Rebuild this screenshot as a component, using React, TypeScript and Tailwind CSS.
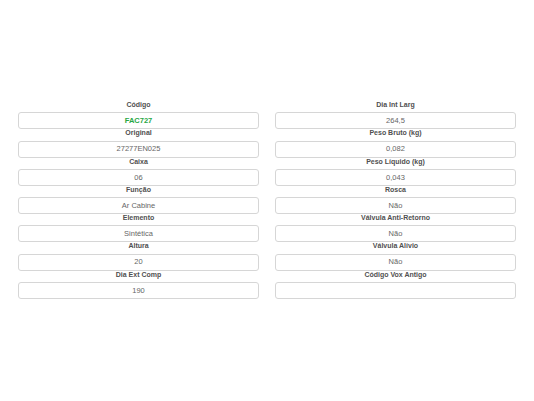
const left = [
  { label: "Código", value: "FAC727", highlight: true },
  { label: "Original", value: "27277EN025" },
  { label: "Caixa", value: "06" },
  { label: "Função", value: "Ar Cabine" },
  { label: "Elemento", value: "Sintética" },
  { label: "Altura", value: "20" },
  { label: "Dia Ext Comp", value: "190" },
];

const right = [
  { label: "Dia Int Larg", value: "264,5" },
  { label: "Peso Bruto (kg)", value: "0,082" },
  { label: "Peso Líquido (kg)", value: "0,043" },
  { label: "Rosca", value: "Não" },
  { label: "Válvula Anti-Retorno", value: "Não" },
  { label: "Válvula Alívio", value: "Não" },
  { label: "Código Vox Antigo", value: "" },
];

type Field = { label: string; value: string; highlight?: boolean };

const FieldBox = ({ label, value, highlight }: Field) => {
  return (
    <div className="flex flex-col">
      <p className="h-[8px] mb-[3.25px] text-center text-[7px] leading-[8px] font-bold text-[#505050]">
        {label}
      </p>
      <div
        className={`h-[17px] rounded-[3px] border border-[#d6d6d6] bg-white flex items-center justify-center text-[7.5px] ${
          highlight ? "text-[#28a745] font-semibold" : "text-[#666]"
        }`}
      >
        {value}
      </div>
    </div>
  );
};

export default function App() {
  return (
    <div
      className="w-[534px] h-[401px] bg-white pt-[101px] px-[18px]"
      style={{ fontFamily: '"Liberation Sans", Arial, sans-serif' }}
    >
      <div className="grid grid-cols-2 gap-x-[16px]">
        <div className="flex flex-col">
          {left.map((f) => (
            <FieldBox key={f.label} {...f} />
          ))}
        </div>
        <div className="flex flex-col">
          {right.map((f) => (
            <FieldBox key={f.label} {...f} />
          ))}
        </div>
      </div>
    </div>
  );
}
